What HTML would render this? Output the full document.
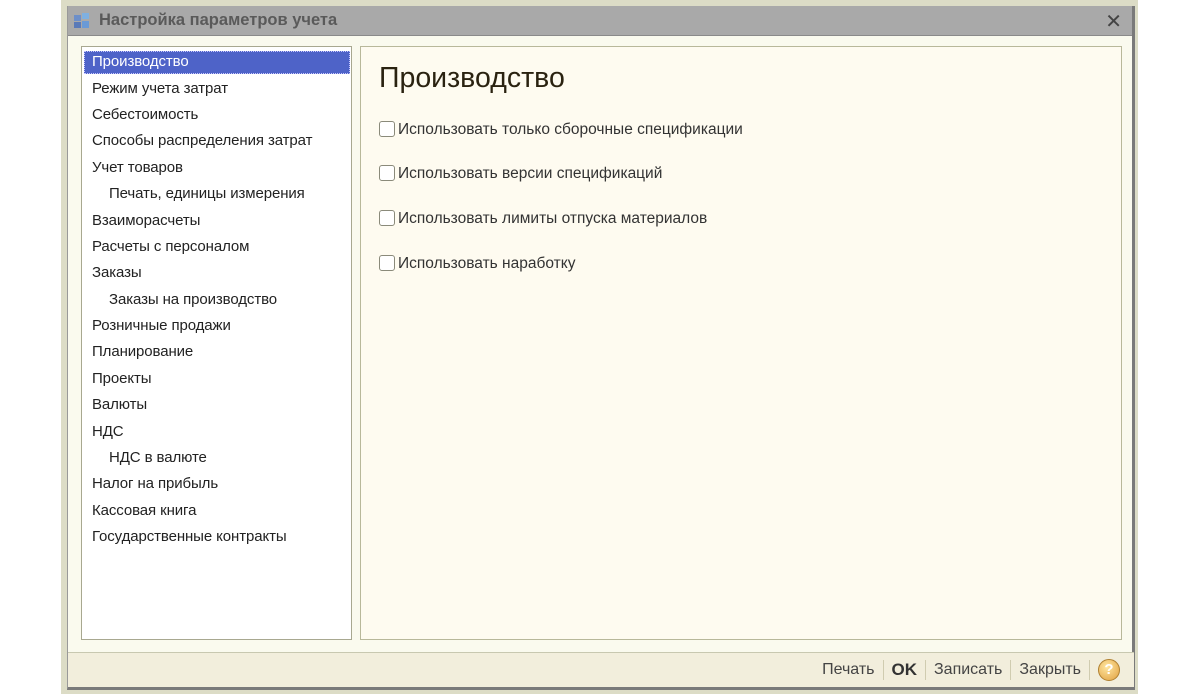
<!DOCTYPE html>
<html><head><meta charset="utf-8"><style>
*{margin:0;padding:0;box-sizing:border-box}
body{width:1200px;height:694px;background:#fff;position:relative;overflow:hidden;font-family:"Liberation Sans","DejaVu Sans",sans-serif;color:#222}
.frame{position:absolute;left:61px;top:0;width:1077px;height:694px;background:#dcdcc6}
.win{position:absolute;left:67px;top:6px;width:1068px;height:684px;background:#fafaee;border-right:3px solid #7a7a7a;border-bottom:3px solid #7a7a7a;border-left:1px solid #999}
.title{position:absolute;left:0;top:0;width:100%;height:30px;background:#a9a9a9;border-bottom:1px solid #8a8a8a}
.title span{position:absolute;left:31px;top:5px;font-size:16.5px;font-weight:bold;color:#5a5a5a}
.x{position:absolute;right:10px;top:3px;font-size:20px;color:#444;font-weight:bold}
.list{position:absolute;left:81px;top:46px;width:271px;height:594px;background:#fff;border:1px solid #a8a890}
.item{position:absolute;left:10px;font-size:15px;line-height:20px;height:20px;white-space:nowrap;letter-spacing:-0.1px}
.sel{position:absolute;left:2px;top:4px;width:266px;height:23px;background:#4e63c8;outline:1px dotted #c8c8ff;outline-offset:-1px}
.panel{position:absolute;left:360px;top:46px;width:762px;height:594px;background:#fefbf0;border:1px solid #b8b89a}
.h{position:absolute;left:18px;top:15px;font-size:28.5px;color:#2a2210}
.cb{position:absolute;left:18px;font-size:15.5px;white-space:nowrap;color:#333}
.cb i{display:inline-block;width:16px;height:16px;border:1px solid #8a8a7a;border-radius:3px;background:#fff;vertical-align:-3px;margin-right:3px}
.bot{position:absolute;left:68px;top:652px;width:1066px;height:35px;background:#f2eedc;border-top:1px solid #c8c8b0}
.btns{position:absolute;right:14px;top:6px;font-size:16px;color:#444;display:flex;align-items:center}
.btns span{padding:0 8px;border-right:1px solid #d0ccb0;line-height:20px}
.help{width:22px;height:22px;border-radius:50%;background:radial-gradient(circle at 40% 35%,#ffe6a0,#e0a040);border:1px solid #b08030;color:#fff;font-weight:bold;font-size:15px;text-align:center;line-height:20px;margin-left:8px}
</style></head><body>
<div class="frame"></div>
<div class="win">
<div class="title">
<svg style="position:absolute;left:6px;top:7px" width="18" height="16" viewBox="0 0 18 16"><rect x="0" y="2" width="7" height="6" fill="#6d8fc9"/><rect x="8" y="0" width="7" height="6" fill="#7fb0e0"/><rect x="0" y="9" width="7" height="6" fill="#5a7ab8"/><rect x="8" y="8" width="7" height="7" fill="#6a9ad6"/></svg>
<span>Настройка параметров учета</span><div class="x">✕</div></div>
</div>
<div class="list">
<div class="sel"></div>
<div class="item" style="top:5px;color:#fff">Производство</div>
<div class="item" style="top:32px">Режим учета затрат</div>
<div class="item" style="top:58px">Себестоимость</div>
<div class="item" style="top:84px">Способы распределения затрат</div>
<div class="item" style="top:111px">Учет товаров</div>
<div class="item" style="top:137px;left:27px">Печать, единицы измерения</div>
<div class="item" style="top:164px">Взаиморасчеты</div>
<div class="item" style="top:190px">Расчеты с персоналом</div>
<div class="item" style="top:216px">Заказы</div>
<div class="item" style="top:243px;left:27px">Заказы на производство</div>
<div class="item" style="top:269px">Розничные продажи</div>
<div class="item" style="top:295px">Планирование</div>
<div class="item" style="top:322px">Проекты</div>
<div class="item" style="top:348px">Валюты</div>
<div class="item" style="top:375px">НДС</div>
<div class="item" style="top:401px;left:27px">НДС в валюте</div>
<div class="item" style="top:427px">Налог на прибыль</div>
<div class="item" style="top:454px">Кассовая книга</div>
<div class="item" style="top:480px">Государственные контракты</div>
</div>
<div class="panel">
<div class="h">Производство</div>
<div class="cb" style="top:74px"><i></i>Использовать только сборочные спецификации</div>
<div class="cb" style="top:118px"><i></i>Использовать версии спецификаций</div>
<div class="cb" style="top:163px"><i></i>Использовать лимиты отпуска материалов</div>
<div class="cb" style="top:208px"><i></i>Использовать наработку</div>
</div>
<div class="bot"><div class="btns"><span>Печать</span><span style="font-weight:bold;font-size:17px;color:#333">OK</span><span>Записать</span><span>Закрыть</span><div class="help">?</div></div></div>
</body></html>
